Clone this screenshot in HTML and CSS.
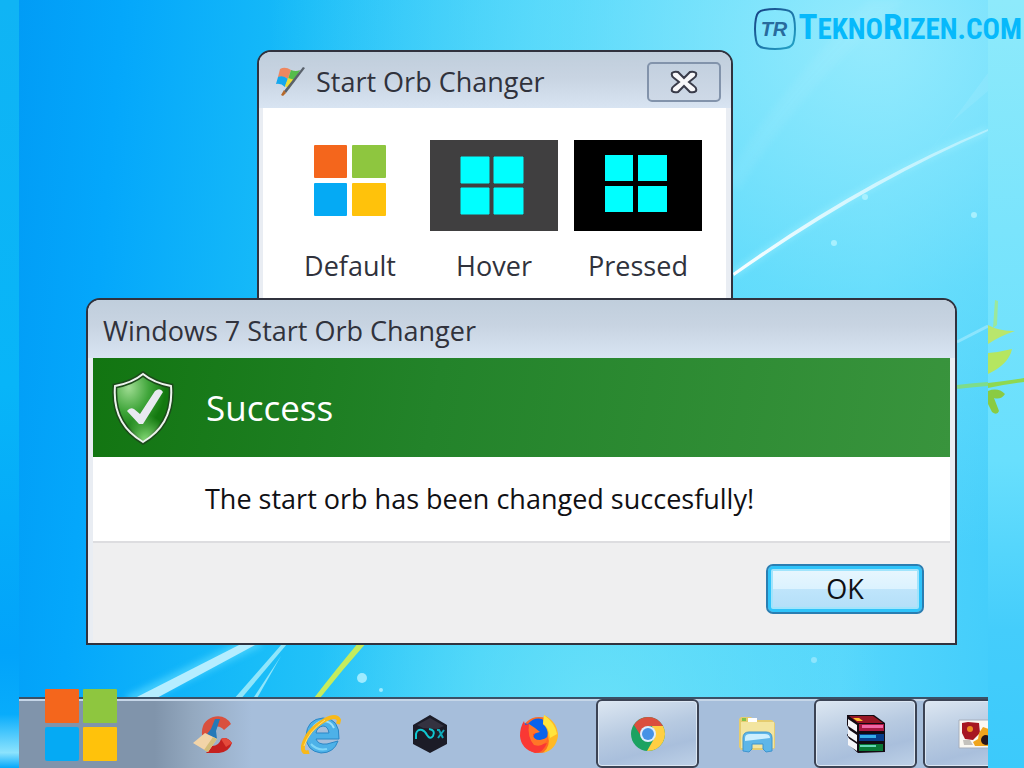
FILE: index.html
```html
<!DOCTYPE html>
<html lang="en">
<head>
    <meta charset="UTF-8">
    <meta name="viewport" content="width=device-width, initial-scale=1.0">
    <title>Windows 7 Start Orb Changer</title>
    <link rel="stylesheet" href="styles.css">
</head>
<body>

<!-- Leaves on the right edge -->
<svg class="edge-art" viewBox="0 0 36 120" aria-hidden="true">
    <path d="M7 0L10 1L9 25L5 28Z" fill="#9be89c"/>
    <path d="M0 25Q10 31 27 31Q12 36 0 44Z" fill="#b9e66d"/>
    <path d="M0 53Q12 52 24 49Q21 64 0 74Z" fill="#b5e660"/>
    <path d="M0 83Q18 81 36 78V82Q18 84 0 88Z" fill="#8fd850"/>
    <path d="M0 91Q10 87 17 94Q13 100 6 98L11 111Q9 116 4 112L0 104Z" fill="#8acb42"/>
</svg>

<main class="desktop">
    <!-- Wallpaper -->
    <svg class="wallpaper" viewBox="0 0 969 768" preserveAspectRatio="none" aria-hidden="true">
        <defs>
            <filter id="soft" x="-20%" y="-20%" width="140%" height="140%"><feGaussianBlur stdDeviation="3"/></filter>
            <linearGradient id="ray" x1="0" y1="1" x2="1" y2="0">
                <stop offset="0" stop-color="#fff" stop-opacity=".95"/>
                <stop offset="1" stop-color="#fff" stop-opacity=".35"/>
            </linearGradient>
        </defs>
        <path d="M715 274Q842 182 969 130" fill="none" stroke="#9ff0ff" stroke-width="7" opacity=".5" filter="url(#soft)"/>
        <path d="M714 273Q842 181 969 129V131Q845 185 715 276Z" fill="url(#ray)"/>
        <path d="M900 165Q935 120 969 73V91L935 120Z" fill="#fff" opacity=".08"/>
        <path d="M705 180Q760 90 850 0H885Q780 90 720 190Z" fill="#fff" opacity=".05" filter="url(#soft)"/>
        <path d="M938 342L969 326" stroke="#b9f1ff" stroke-width="3" opacity=".5"/>
        <path d="M938 387Q955 385 969 384" stroke="#7edc8a" stroke-width="4"/>
        <path d="M110 702L240 640" stroke="#5edcff" stroke-width="14" opacity=".6" filter="url(#soft)"/>
        <path d="M112 700L222 644H238L134 700Z" fill="#b5edff"/>
        <path d="M214 700L263 644H268L221 700Z" fill="#90e6fb"/>
        <path d="M233 700L262 656L237 700Z" fill="#90e6fb"/>
        <path d="M295 698Q318 668 340 642H348Q324 669 301 698Z" fill="#c5ec5c"/>
        <circle cx="343" cy="678" r="5" fill="#9eebff"/>
        <circle cx="362" cy="690" r="2" fill="#9eebff"/>
        <circle cx="815" cy="243" r="3" fill="#a8f0fe"/>
        <circle cx="846" cy="197" r="3" fill="#a8f0fe"/>
        <circle cx="955" cy="215" r="3" fill="#a8f0fe"/>
        <circle cx="795" cy="660" r="3" fill="#8de5fd"/>
    </svg>

    <!-- Orb changer window -->
    <section class="window orb-window" aria-label="Start Orb Changer">
        <header class="titlebar">
            <svg class="flag" viewBox="0 0 30 32" aria-hidden="true">
                <path d="M4 3Q9 0 15 4L12 13Q7 10 2 11Z" fill="#ee8760"/>
                <path d="M15 4Q20 6 24 4L18 16L12 13Z" fill="#55bd4c"/>
                <path d="M2 11Q7 9 12 13L9 21Q5 17 0 18Z" fill="#14a8ee"/>
                <path d="M12 12L19 14L13 23L9 20Z" fill="#ebdc37"/>
                <path d="M27 1L29 2L10 27L8 25Z" fill="#59616b"/>
                <path d="M8 24L10 27L7 30L5 29Z" fill="#b5692b"/>
            </svg>
            <h1>Start Orb Changer</h1>
            <button class="close-button" type="button" aria-label="Close">
                <svg viewBox="0 0 28 24">
                    <path d="M2 3Q4 1 8 2L14 8L20 2Q24 1 26 3Q27 6 24 8L19 12L24 16Q27 18 26 21Q24 23 20 22L14 16L8 22Q4 23 2 21Q1 18 4 16L9 12L4 8Q1 6 2 3Z" fill="#f8f8fa" stroke="#393b49" stroke-width="2"/>
                </svg>
            </button>
        </header>
        <div class="orb-list">
            <figure class="orb">
                <svg viewBox="0 0 128 92" aria-hidden="true">
                    <rect x="28" y="5" width="33" height="33" rx="1" fill="#f4661c"/>
                    <rect x="66" y="5" width="34" height="33" rx="1" fill="#8ec63f"/>
                    <rect x="28" y="43" width="33" height="33" rx="1" fill="#05aaf4"/>
                    <rect x="66" y="43" width="34" height="33" rx="1" fill="#ffc20b"/>
                </svg>
                <figcaption>Default</figcaption>
            </figure>
            <figure class="orb">
                <svg viewBox="0 0 128 92" aria-hidden="true">
                    <rect width="128" height="91" fill="#403f40"/>
                    <path d="M31 17h28v26H31zM64 17h29v26H64zM31 48h28v26H31zM64 48h29v26H64z" fill="#0ff" stroke="#0ff" stroke-linejoin="round"/>
                </svg>
                <figcaption>Hover</figcaption>
            </figure>
            <figure class="orb">
                <svg viewBox="0 0 128 92" aria-hidden="true">
                    <rect width="128" height="91" fill="#000"/>
                    <path d="M31 15h28v26H31zM64 15h29v26H64zM31 46h28v26H31zM64 46h29v26H64z" fill="#0ff"/>
                </svg>
                <figcaption>Pressed</figcaption>
            </figure>
        </div>
    </section>

    <!-- Success dialog -->
    <section class="window dialog" role="dialog" aria-labelledby="dialogTitle">
        <header class="titlebar">
            <h2 id="dialogTitle">Windows 7 Start Orb Changer</h2>
        </header>
        <div class="banner">
            <svg class="shield" viewBox="0 0 62 74" aria-hidden="true">
                <defs>
                    <radialGradient id="shieldTop" cx=".25" cy=".2" r=".65">
                        <stop offset="0" stop-color="#9fdc92"/>
                        <stop offset=".55" stop-color="#3fa53a"/>
                        <stop offset="1" stop-color="#13780f"/>
                    </radialGradient>
                    <radialGradient id="shieldGlow" cx=".55" cy="1" r=".4">
                        <stop offset="0" stop-color="#8be07c"/>
                        <stop offset="1" stop-color="#8be07c" stop-opacity="0"/>
                    </radialGradient>
                </defs>
                <path d="M31 3Q42 12 59 15Q62 53 31 71Q0 53 3 15Q20 12 31 3Z" fill="url(#shieldTop)" stroke="#1c4a1b" stroke-width="5"/>
                <path d="M31 3Q42 12 59 15Q62 53 31 71Q0 53 3 15Q20 12 31 3Z" fill="url(#shieldGlow)" stroke="#edf3ee" stroke-width="2"/>
                <path d="M15 40Q18 36 22 38L28 43L43 20Q48 16 51 21L31 53H27Z" fill="#e8e9f0"/>
            </svg>
            <h3>Success</h3>
        </div>
        <p class="message">The start orb has been changed succesfully!</p>
        <div class="dialog-footer">
            <button class="ok-button" type="button">OK</button>
        </div>
    </section>

    <!-- Taskbar -->
    <nav class="taskbar" aria-label="Taskbar">
        <button class="start-button" type="button" aria-label="Start">
            <svg viewBox="0 0 72 72">
                <rect width="34" height="34" rx="1" fill="#f4661c"/>
                <rect x="38" width="34" height="34" rx="1" fill="#8ec63f"/>
                <rect y="38" width="34" height="34" rx="2" fill="#05aaf4"/>
                <rect x="38" y="38" width="34" height="34" rx="1" fill="#ffc20b"/>
            </svg>
        </button>
        <button class="task" type="button" aria-label="CCleaner">
            <svg viewBox="0 0 40 40">
                <path d="M10 21Q9 7 21 3Q33 0 39 10L32 16Q27 10 21 14Q17 17 19 24Z" fill="#d9503e"/>
                <path d="M20 32Q27 32 29 25Q35 22 40 29Q37 38 27 39H14Z" fill="#c5211f"/>
                <path d="M29 25Q34 22 40 29L34 33Z" fill="#e44a3b"/>
                <path d="M23 5L28 5L24 17L25 25L15 20L19 15Z" fill="#2479b8"/>
                <path d="M13 19L25 25L16 38L1 29Z" fill="#f2d4a8"/>
                <path d="M21 23L25 25L16 38L12 36Z" fill="#d4bd79"/>
            </svg>
        </button>
        <button class="task" type="button" aria-label="Internet Explorer">
            <svg viewBox="0 0 40 40">
                <path d="M22 4Q39 4 38 25H15Q17 31 26 30L37 27Q33 39 20 39Q5 37 5 22Q6 5 22 4ZM15 19H28Q27 12 22 12Q16 13 15 19Z" fill="#4db1e8" fill-rule="evenodd" stroke="#2b87c6"/>
                <path d="M12 14Q15 8 22 7Q30 7 33 14" fill="none" stroke="#9de1fa" stroke-width="2"/>
                <path d="M10 30Q16 37 26 35" fill="none" stroke="#7fd6f8" stroke-width="2"/>
                <path d="M8 38Q1 40 2 32Q6 16 24 6Q35 0 38 6L37 10" fill="none" stroke="#f8b91a" stroke-width="4"/>
                <path d="M3 32Q8 17 24 6" fill="none" stroke="#ffe177"/>
            </svg>
        </button>
        <button class="task" type="button" aria-label="Nox">
            <svg viewBox="0 0 40 40">
                <path d="M20 1L37 11V30L20 39L3 30V11Z" fill="#1c1c27"/>
                <path d="M20 4L34 12L27 15L13 14L7 11Z" fill="#343240"/>
                <path d="M6 25V20Q7 15 12 16Q15 17 17 21Q20 26 23 22Q26 16 19 15" fill="none" stroke="#10c7d0" stroke-width="2"/>
                <path d="M27 16H29L33 24M34 16L28 24" fill="none" stroke="#10aab9" stroke-width="2"/>
            </svg>
        </button>
        <button class="task" type="button" aria-label="Firefox">
            <svg viewBox="0 0 40 40">
                <circle cx="20" cy="21" r="18" fill="#ff6a22"/>
                <path d="M5 9L9 10Q15 3 23 5Q32 12 28 23Q23 30 15 25Z" fill="#0863ed"/>
                <path d="M5 7L6 11L10 10Q10 14 14 17L17 18L14 23Q18 28 22 26Q20 31 28 29Q24 39 16 39Q2 35 1 22Q1 13 5 7Z" fill="#fa3834"/>
                <path d="M10 10L16 14L21 18L14 20Q14 26 21 26Q26 25 29 23Q26 34 15 31Q8 23 10 10Z" fill="#ff7627"/>
                <path d="M25 1Q39 8 39 22Q37 36 24 39Q32 32 29 22Q29 14 24 10Z" fill="#ffb924"/>
                <path d="M25 1Q36 9 38 20L31 24Q30 13 24 10Z" fill="#ffe43d"/>
            </svg>
        </button>
        <button class="task open" type="button" aria-label="Chrome">
            <svg viewBox="0 0 40 40">
                <circle cx="20" cy="20" r="17" fill="#1ba261"/>
                <path d="M6 11Q11 3 20 3Q30 3 35 12H20L13 22Z" fill="#da4f3e"/>
                <path d="M35 12Q39 20 35 28Q30 37 19 37L27 23L24 12Z" fill="#ffcf42"/>
                <circle cx="20" cy="20" r="8" fill="#dcedff"/>
                <circle cx="20" cy="20" r="6" fill="#4592e6"/>
            </svg>
        </button>
        <button class="task" type="button" aria-label="File Explorer">
            <svg viewBox="0 0 40 40">
                <path d="M2 5L4 3H14L17 6H35L38 9V34L34 36H4L2 33Z" fill="#e5cc6f"/>
                <path d="M4 8H37V34H4Z" fill="#f3e5a0"/>
                <path d="M11 4H20V8H11Z" fill="#fff"/>
                <path d="M5 4H9V7H5Z" fill="#83c34d"/>
                <path d="M6 37V24Q6 18 12 18H29Q35 18 35 24V37L29 38L26 35V30H15V35L12 38Z" fill="#5eb6e8" stroke="#3e94ce"/>
                <path d="M8 24Q8 20 13 20H28Q33 20 33 24L8 27Z" fill="#ccefff"/>
            </svg>
        </button>
        <button class="task open" type="button" aria-label="WinRAR">
            <svg viewBox="0 0 40 40">
                <path d="M1 1L28 1L39 9V38L12 39L2 30L4 26L1 21L4 17L1 11Z" fill="#130a12"/>
                <path d="M3 2H27L37 9H12Z" fill="#971625"/>
                <path d="M7 4H13L17 7H11Z" fill="#ffc12e"/>
                <path d="M2 5L11 11V18L2 12ZM2 15L11 21V28L2 22ZM2 24L11 30V37L2 31Z" fill="#f5f5f8"/>
                <path d="M13 10H38V17H13Z" fill="#a91841"/>
                <path d="M16 11H37V14H16Z" fill="#f067a6"/>
                <path d="M13 20H38V27H13Z" fill="#063b8a"/>
                <path d="M14 21H30V24H14Z" fill="#35adea"/>
                <path d="M13 30H37V37H13Z" fill="#087735"/>
                <path d="M14 31H30V33H14Z" fill="#62d5b4"/>
            </svg>
        </button>
        <button class="task open" type="button" aria-label="Pictures">
            <svg class="photo" viewBox="0 0 40 40">
                <path d="M4 6H40V34H4Z" fill="#faf8f2" stroke="#a7afbc"/>
                <path d="M7 9L13 8L24 9L25 19L18 26L10 25L7 19Z" fill="#a71620"/>
                <circle cx="15" cy="15" r="3" fill="#ed8b20"/>
                <path d="M8 26L15 26L18 31H9Z" fill="#c4c2bd"/>
                <path d="M24 19L28 13L40 17V32H20L18 28L23 25Z" fill="#efa51d"/>
                <circle cx="31" cy="26" r="5" fill="#27151a"/>
            </svg>
        </button>
    </nav>
</main>

<!-- Site badge -->
<a class="brand" href="#">
    <svg viewBox="0 0 44 44" aria-hidden="true">
        <defs>
            <linearGradient id="badge" x1="0" y1="0" x2="1" y2="1">
                <stop offset="0" stop-color="#173f83"/>
                <stop offset="1" stop-color="#23a6c9"/>
            </linearGradient>
        </defs>
        <path d="M11 3Q22 1 33 3Q40 4 41 11Q43 22 41 33Q40 40 33 41Q22 43 11 41Q4 40 3 33Q1 22 3 11Q4 4 11 3Z" fill="none" stroke="url(#badge)" stroke-width="2"/>
        <text class="badge-text" x="21" y="29" text-anchor="middle">TR</text>
    </svg>
    <span>T<small>EKNO</small>R<small>IZEN.COM</small></span>
</a>

</body>
</html>
```
FILE: styles.css
```css
* {
    box-sizing: border-box;
}

body {
    margin: 0;
    min-height: 100vh;
    display: flex;
    position: relative;
    overflow: hidden;
    font-family: 'Open Sans', 'Noto Sans', sans-serif;
    color: #30323c;
    padding: 0 36px 0 19px;
    background:
        linear-gradient(#8eeafb, #7ae4fc 30%, #68dffd 60%, #44cdfb 82%, #3ccafb) right / 36px 100% no-repeat,
        linear-gradient(#10b4f4, #08b5f8 50%, #02a3fa 85%, #08acfb 93%, #8ce3fd 98%, #04a8fb) left / 19px 100% no-repeat;
}

h1, h2, h3, p, figure {
    margin: 0;
    font-weight: normal;
}

button {
    font-family: inherit;
    padding: 0;
    cursor: pointer;
}

svg {
    display: block;
}

.edge-art {
    position: absolute;
    right: 0;
    top: 300px;
    width: 36px;
}

.desktop {
    flex: 1;
    min-width: 0;
    position: relative;
    overflow: hidden;
    display: flex;
    flex-direction: column;
    justify-content: flex-end;
    background:
        radial-gradient(ellipse at 88% 5%, rgba(160, 238, 253, 0.85), rgba(120, 228, 252, 0.55) 25%, transparent 50%),
        radial-gradient(ellipse at 60% 95%, rgba(115, 228, 248, 0.8), transparent 35%),
        linear-gradient(95deg, #019cf6, #04a7fb 10%, #18bcf8 28%, #3bcff9 50%, #55d6fc 85%, #43cdfb);
}

.wallpaper {
    position: absolute;
    inset: 0;
    width: 100%;
    height: 100%;
}

/* Windows */
.window {
    position: absolute;
    border: 2px solid #30323e;
    border-radius: 14px 14px 0 0;
    background: #e9edf3;
    overflow: hidden;
}

.titlebar {
    display: flex;
    align-items: center;
    background: linear-gradient(#c0cedc, #c8d4e2 45%, #d8e4f2);
}

.titlebar h1, .titlebar h2 {
    font-size: 27px;
    line-height: 36px;
}

.orb-window {
    left: 238px;
    top: 50px;
    width: 476px;
}

.orb-window .titlebar {
    height: 56px;
    padding: 4px 10px 0 17px;
    gap: 10px;
}

.orb-window h1 {
    flex: 1;
}

.flag {
    width: 30px;
}

.close-button {
    width: 74px;
    height: 40px;
    display: flex;
    align-items: center;
    justify-content: center;
    border: 2px solid #8293ab;
    border-radius: 5px;
    background: linear-gradient(#c3d0df, #ced9e7);
}

.close-button svg {
    width: 28px;
}

.orb-list {
    display: flex;
    justify-content: center;
    gap: 16px;
    margin: 0 5px 0 4px;
    padding: 32px 1px 40px 0;
    background: #fff;
}

.orb {
    width: 128px;
    text-align: center;
}

.orb figcaption {
    margin-top: 16px;
    font-size: 27px;
    line-height: 36px;
}

.dialog {
    left: 67px;
    right: 31px;
    top: 298px;
}

.dialog .titlebar {
    height: 58px;
    padding: 4px 15px 0;
}

.banner {
    display: flex;
    align-items: center;
    gap: 32px;
    height: 99px;
    margin: 0 5px;
    padding: 0 19px;
    color: #fff;
    background: linear-gradient(100deg, #127511, #23832a 40%, #39943d);
}

.shield {
    width: 62px;
}

.banner h3 {
    font-size: 35px;
    line-height: 48px;
}

.message {
    margin: 0 5px;
    padding: 24px 0 24px 112px;
    font-size: 27px;
    line-height: 36px;
    color: #101014;
    background: #fff;
    border-bottom: 2px solid #dddde0;
}

.dialog-footer {
    display: flex;
    justify-content: flex-end;
    margin: 0 5px;
    padding: 21px 26px 29px;
    background: #efeff0;
}

.ok-button {
    width: 158px;
    height: 50px;
    border: 2px solid #2a7eb2;
    border-radius: 7px;
    box-shadow: inset 0 0 0 3px #2fc4fa, inset 0 0 0 5px #a0e4fc;
    background: linear-gradient(#eaf7fe, #dbf2fe 50%, #bfe5fb 50%, #b2def8);
    font-size: 27px;
    line-height: 36px;
    color: #101014;
}

/* Taskbar */
.taskbar {
    position: relative;
    display: flex;
    gap: 6px;
    height: 71px;
    border-top: 2px solid #3a5066;
    box-shadow: inset 0 2px 0 #c6d6e8;
    background: linear-gradient(90deg, #8094ab, #8094ab 14%, #94a9c0 18%, #a6bedb 24%);
}

.start-button {
    flex: none;
    width: 135px;
    padding-left: 26px;
    margin-top: -18px;
    border: none;
    background: none;
}

.start-button svg {
    width: 72px;
}

.task {
    flex: none;
    display: flex;
    align-items: center;
    justify-content: center;
    width: 103px;
    border: 2px solid transparent;
    border-radius: 6px;
    background: none;
}

.task svg {
    width: 40px;
}

.task.open {
    border-color: #3b4354;
    box-shadow: inset 0 0 0 1px #dce7f3;
    background: linear-gradient(165deg, #dde7f2, #b7cae1 45%, #a9bfdc 70%, #bed1e7);
}

.task .photo {
    width: 40px;
}

/* Site badge */
.brand {
    position: absolute;
    top: 6px;
    right: 2px;
    display: flex;
    align-items: center;
    gap: 1px;
    font-family: 'Liberation Sans Narrow', 'Roboto Condensed', 'DejaVu Sans Condensed', sans-serif;
    font-size: 35px;
    line-height: 44px;
    font-weight: bold;
    color: #06b9fb;
    text-decoration: none;
}

.brand svg {
    width: 44px;
}

.brand small {
    font-size: 29px;
}

.badge-text {
    font-family: 'Liberation Sans', sans-serif;
    font-size: 20px;
    font-style: italic;
    font-weight: bold;
    fill: #286b9d;
}
```
